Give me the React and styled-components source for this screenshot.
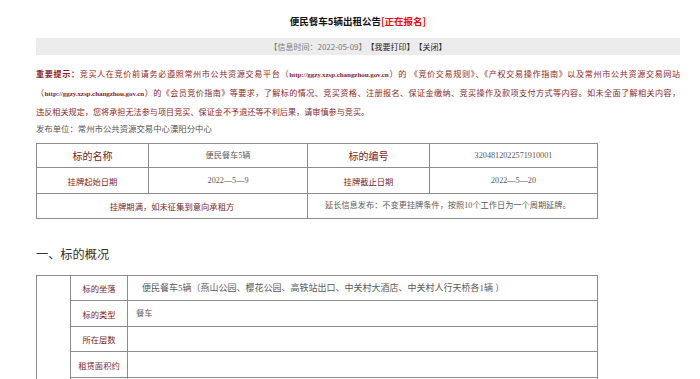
import React from "react";
import styled, { createGlobalStyle } from "styled-components";

const Global = createGlobalStyle`
  html, body { margin: 0; padding: 0; background: #fff; overflow: hidden; }
  body { font-family: "Liberation Serif", "Noto Sans CJK SC", serif; }
`;

const Page = styled.div`
  width: 700px;
  padding: 0 20px 0 36px;
  box-sizing: border-box;
`;

const Title = styled.h1`
  margin: 0;
  padding-top: 12px;
  height: 26px;
  box-sizing: border-box;
  text-align: center;
  font-family: "Noto Sans CJK SC", sans-serif;
  font-size: 9.5px;
  line-height: 19px;
  font-weight: bold;
  color: #111;
`;

const Status = styled.span`
  color: #f00;
`;

const InfoBar = styled.div`
  height: 17px;
  margin-top: 12px;
  background: #ececec;
  display: flex;
  justify-content: center;
  align-items: center;
  font-family: "Noto Sans CJK SC", sans-serif;
  font-size: 8px;
  color: #222;
`;

const InfoItem = styled.span`
  color: ${(p) => (p.$muted ? "#7a7a7a" : "#222")};
`;

const Notice = styled.div`
  margin-top: 11px;
  font-size: 8.15px;
  line-height: 17.8px;
  color: #8a1f1f;
  width: 644px;
  overflow: hidden;
`;

const NoticeLine = styled.div`
  white-space: nowrap;
  text-align: ${(p) => (p.$full ? "justify" : "left")};
  text-align-last: ${(p) => (p.$full ? "justify" : "left")};
  letter-spacing: ${(p) => (p.$full ? "-0.25px" : "0")};
`;

const Strong = styled.b`
  font-weight: bold;
`;

const Url = styled.span`
  font-weight: bold;
  font-size: 7.1px;
  letter-spacing: -0.1px;
`;

const Publisher = styled.div`
  margin-top: -1px;
  font-family: "Noto Sans CJK SC", sans-serif;
  font-size: 8.4px;
  line-height: 17.8px;
  color: #555;
`;

const Table = styled.table`
  border-collapse: collapse;
  table-layout: fixed;
  width: 561px;
  margin-top: ${(p) => p.$mt}px;
`;

const Row = styled.tr`
  height: ${(p) => p.$h}px;
`;

const LabelCell = styled.td`
  border: 1px solid #8c8c8c;
  padding: 0;
  text-align: center;
  vertical-align: middle;
  font-family: "Noto Sans CJK SC", sans-serif;
  font-size: ${(p) => p.$size || 8.3}px;
  font-weight: 400;
  color: #7a1e1e;
  line-height: 12px;
`;

const ValueCell = styled.td`
  border: 1px solid #8c8c8c;
  padding: 0;
  padding-left: ${(p) => (p.$left ? p.$pad : 0)}px;
  text-align: ${(p) => (p.$left ? "left" : "center")};
  vertical-align: middle;
  font-family: "Liberation Serif", "Noto Sans CJK SC", serif;
  font-size: ${(p) => p.$size || 8.2}px;
  color: #5a5a5a;
  line-height: 12px;
  white-space: nowrap;
`;

const SideCell = styled.td`
  border: 1px solid #8c8c8c;
  padding: 0;
`;

const Heading = styled.h2`
  margin: 27px 0 0;
  font-family: "Noto Sans CJK SC", sans-serif;
  font-weight: normal;
  font-size: 12.2px;
  line-height: 16px;
  color: #333;
`;

export default function App() {
  return (
    <Page>
      <Global />
      <Title>
        便民餐车5辆出租公告<Status>[正在报名]</Status>
      </Title>
      <InfoBar>
        <InfoItem $muted>【信息时间：2022-05-09】</InfoItem>
        <InfoItem>【我要打印】</InfoItem>
        <InfoItem>【关闭】</InfoItem>
      </InfoBar>
      <Notice>
        <NoticeLine $full>
          <Strong>重要提示：</Strong>竞买人在竞价前请务必遵照常州市公共资源交易平台（
          <Url>http://ggzy.xzsp.changzhou.gov.cn</Url>）的 《竞价交易规则》、《产权交易操作指南》以及常州市公共资源交易网站
        </NoticeLine>
        <NoticeLine $full>
          （<Url>http://ggzy.xzsp.changzhou.gov.cn</Url>）的《会员竞价指南》等要求，了解标的情况、竞买资格、注册报名、保证金缴纳、竞买操作及款项支付方式等内容。如未全面了解相关内容，
        </NoticeLine>
        <NoticeLine>
          违反相关规定，您将承担无法参与项目竞买、保证金不予退还等不利后果，请审慎参与竞买。
        </NoticeLine>
      </Notice>
      <Publisher>发布单位：常州市公共资源交易中心溧阳分中心</Publisher>

      <Table $mt={5}>
        <colgroup>
          <col style={{ width: 112 }} />
          <col style={{ width: 159 }} />
          <col style={{ width: 122 }} />
          <col style={{ width: 168 }} />
        </colgroup>
        <tbody>
          <Row $h={24}>
            <LabelCell $size={10}>标的名称</LabelCell>
            <ValueCell>便民餐车5辆</ValueCell>
            <LabelCell $size={10}>标的编号</LabelCell>
            <ValueCell>3204812022571910001</ValueCell>
          </Row>
          <Row $h={26}>
            <LabelCell>挂牌起始日期</LabelCell>
            <ValueCell>2022—5—9</ValueCell>
            <LabelCell>挂牌截止日期</LabelCell>
            <ValueCell>2022—5—20</ValueCell>
          </Row>
          <Row $h={25}>
            <LabelCell colSpan={2}>挂牌期满，如未征集到意向承租方</LabelCell>
            <ValueCell colSpan={2} $left $pad={17}>
              延长信息发布：不变更挂牌条件，按照10个工作日为一个周期延牌。
            </ValueCell>
          </Row>
        </tbody>
      </Table>

      <Heading>一、标的概况</Heading>

      <Table $mt={13}>
        <colgroup>
          <col style={{ width: 34 }} />
          <col style={{ width: 57 }} />
          <col style={{ width: 470 }} />
        </colgroup>
        <tbody>
          <Row $h={25}>
            <SideCell rowSpan={5} />
            <LabelCell>标的坐落</LabelCell>
            <ValueCell $left $pad={14} $size={9}>
              便民餐车5辆（燕山公园、樱花公园、高铁站出口、中关村大酒店、中关村人行天桥各1辆 ）
            </ValueCell>
          </Row>
          <Row $h={26}>
            <LabelCell>标的类型</LabelCell>
            <ValueCell $left $pad={8}>餐车</ValueCell>
          </Row>
          <Row $h={25}>
            <LabelCell>所在层数</LabelCell>
            <ValueCell $left $pad={8} />
          </Row>
          <Row $h={26}>
            <LabelCell>租赁面积约</LabelCell>
            <ValueCell $left $pad={8} />
          </Row>
          <Row $h={26}>
            <LabelCell>租赁期限</LabelCell>
            <ValueCell $left $pad={8} />
          </Row>
        </tbody>
      </Table>
    </Page>
  );
}
